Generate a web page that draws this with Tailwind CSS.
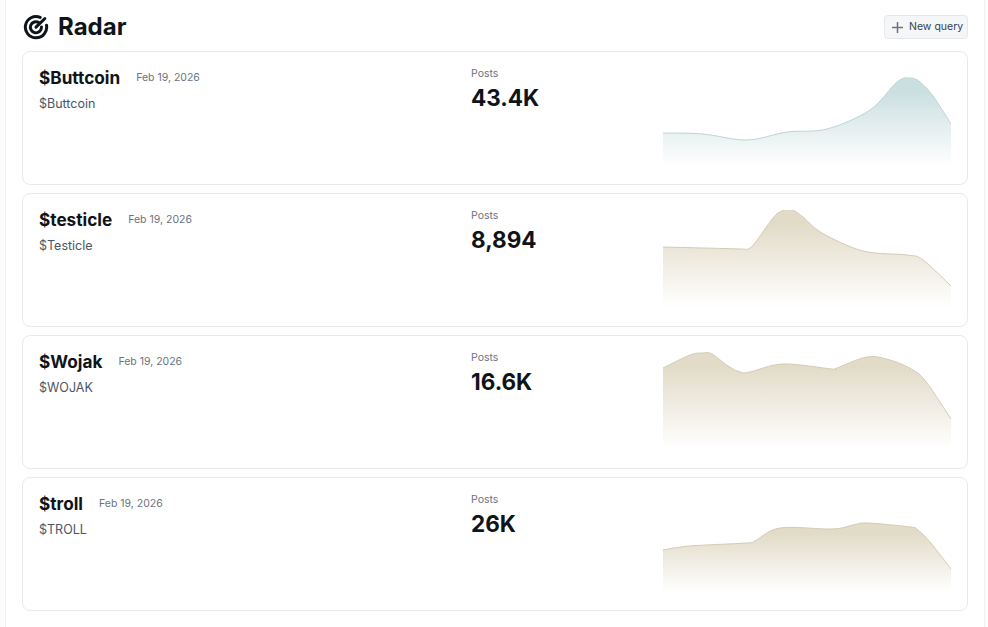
<!DOCTYPE html>
<html lang="en">
<head>
  <meta charset="UTF-8">
  <meta name="viewport" content="width=device-width, initial-scale=1.0">
  <title>Radar</title>
  <script src="https://cdn.jsdelivr.net/npm/@tailwindcss/browser@4"></script>
</head>
<body class="bg-[#fcfcfc] h-[627px] overflow-hidden font-['Inter',sans-serif] text-[#0f1419]">
  <main class="ml-[5px] w-[980px] h-[627px] bg-white border-x border-[#eff1f3] px-4">
    <header class="h-[51px] flex items-center justify-between pt-[3px]">
      <div class="flex items-center gap-[9px]">
        <svg class="w-[26px] h-[26px] ml-[1px]" viewBox="0 0 28 28" fill="none" stroke="#0f1419" stroke-width="3.2" stroke-linecap="round">
          <path d="M18.5 3.6A11.5 11.5 0 1 0 25.3 12"/>
          <path d="M17.2 9.3A6 6 0 1 0 19.9 14"/>
          <path d="M14 14.2 23.6 4.8"/>
        </svg>
        <h1 class="text-[24px] leading-8 font-bold">Radar</h1>
      </div>
      <button class="h-[24px] w-[84px] flex items-center gap-[5px] pl-[6px] bg-[#f5f6f7] border border-[#e5e7eb] rounded-[4px] text-[10.5px] text-[#374151]">
        <svg class="w-[13px] h-[13px]" viewBox="0 0 13 13" fill="none" stroke="#6b7280" stroke-width="1.5"><path d="M6.5 1v11M1 6.5h11"/></svg>
        New query
      </button>
    </header>
    <div id="list" class="flex flex-col gap-2"></div>
  </main>
  <script>
    const rows = [
      { name: '$Buttcoin', query: '$Buttcoin', posts: '43.4K', fill: '#cbdfe0', line: '#bcd5d5', end: 98,
        pts: [[0,65],[40,66],[84,72],[124,64],[164,61],[207,42],[234,14],[247,10],[257,14],[270,28],[288,56]] },
      { name: '$testicle', query: '$Testicle', posts: '8,894', fill: '#e2dbc8', line: '#d3cbb4', end: 97,
        pts: [[0,37],[40,38],[78,39],[85,39],[92,33],[110,8],[119,1],[129,0],[140,7],[159,23],[200,41],[244,45],[260,50],[288,76]] },
      { name: '$Wojak', query: '$WOJAK', posts: '16.6K', fill: '#e2dbc8', line: '#d3cbb4', end: 96,
        pts: [[0,16],[27,3],[40,1],[49,2],[65,14],[77,20],[87,20],[120,12],[169,17],[174,16],[204,5],[227,8],[250,18],[264,31],[288,67]] },
      { name: '$troll', query: '$TROLL', posts: '26K', fill: '#e2dbc8', line: '#d3cbb4', end: 98,
        pts: [[0,56],[27,52],[84,49],[92,47],[117,34],[169,35],[190,31],[204,29],[247,33],[255,36],[267,48],[288,75]] },
    ];

    // catmull-rom through the sampled points
    function smooth(pts) {
      let d = `M${pts[0][0]} ${pts[0][1]}`;
      for (let i = 0; i < pts.length - 1; i++) {
        const a = pts[i - 1] || pts[i], b = pts[i], c = pts[i + 1], e = pts[i + 2] || c;
        const c1 = [b[0] + (c[0] - a[0]) / 6, b[1] + (c[1] - a[1]) / 6];
        const c2 = [c[0] - (e[0] - b[0]) / 6, c[1] - (e[1] - b[1]) / 6];
        d += `C${c1[0].toFixed(1)} ${c1[1].toFixed(1)} ${c2[0].toFixed(1)} ${c2[1].toFixed(1)} ${c[0]} ${c[1]}`;
      }
      return d;
    }

    document.getElementById('list').innerHTML = rows.map((r, i) => {
      const line = smooth(r.pts);
      return `
      <article class="h-[134px] bg-white border border-[#e8eaed] rounded-lg p-4 flex">
        <div class="w-[432px]">
          <div class="flex items-center gap-4 h-[20px]">
            <h2 class="text-[17.2px] leading-5 font-bold">${r.name}</h2>
            <span class="text-[10.5px] leading-4 text-[#6b7280]">Feb 19, 2026</span>
          </div>
          <p class="mt-[6px] text-[12.5px] leading-5 text-[#4b5563]">${r.query}</p>
        </div>
        <div class="w-[192px]">
          <div class="text-[10.5px] leading-[12px] text-[#6b7280]">Posts</div>
          <div class="mt-[2px] text-[22.5px] leading-8 font-bold">${r.posts}</div>
        </div>
        <svg class="w-[288px] h-[100px]" viewBox="0 0 288 100" fill="none">
          <defs>
            <linearGradient id="g${i}" x1="0" y1="0" x2="0" y2="1">
              <stop offset="0.15" stop-color="${r.fill}"/>
              <stop offset="1" stop-color="${r.fill}" stop-opacity="0"/>
            </linearGradient>
          </defs>
          <path d="${line}L288 ${r.end}L0 ${r.end}Z" fill="url(#g${i})"/>
          <path d="${line}" stroke="${r.line}" stroke-width="1"/>
        </svg>
      </article>`;
    }).join('');
  </script>
</body>
</html>
